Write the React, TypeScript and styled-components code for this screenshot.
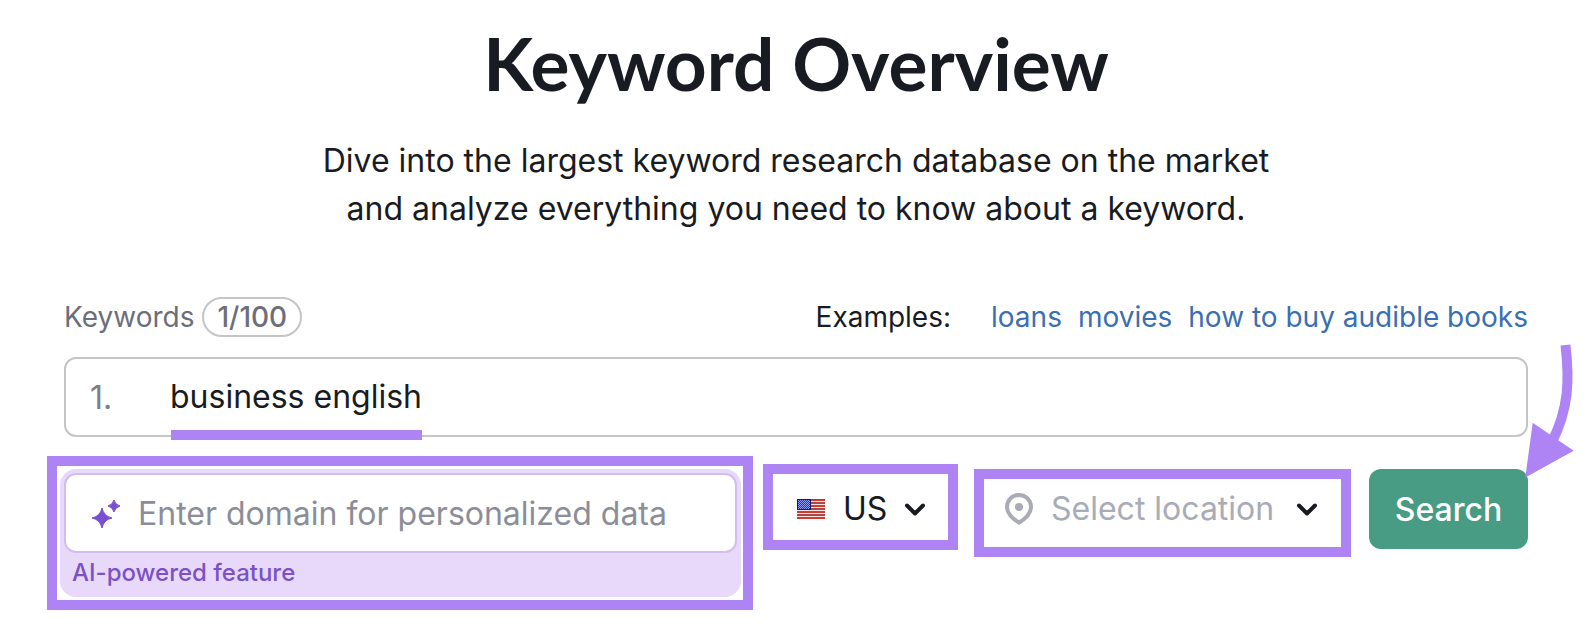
import React from "react";
import styled, { createGlobalStyle } from "styled-components";

const GlobalStyle = createGlobalStyle`
  *, *::before, *::after { box-sizing: border-box; }
  body {
    margin: 0;
    background: #fff;
    color: #191b23;
    font-family: Inter, "Liberation Sans", sans-serif;
    font-optical-sizing: none;
  }
`;

const accent = "#ae84f5";

const Page = styled.main`
  padding: 18px 58px 24px 64px;
`;

const Header = styled.header`
  text-align: center;
`;

const Title = styled.h1`
  margin: 0;
  font-family: Lato, Inter, sans-serif;
  font-size: 73px;
  font-weight: 700;
  line-height: 90px;
`;

const Subtitle = styled.p`
  margin: 29px 0 0;
  font-size: 32px;
  line-height: 48px;
`;

const LabelRow = styled.div`
  display: flex;
  justify-content: space-between;
  align-items: center;
  margin-top: 64px;
  font-size: 28px;
  line-height: 40px;
`;

const KeywordsLabel = styled.label`
  display: flex;
  align-items: center;
  gap: 8px;
  color: #6c6e79;
`;

const Counter = styled.span`
  height: 40px;
  padding: 0 13px;
  border: 2px solid #c4c5c9;
  border-radius: 20px;
  font-weight: 500;
  line-height: 36px;
`;

const Examples = styled.nav`
  display: flex;
  gap: 16px;
`;

const ExamplesTitle = styled.span`
  margin-right: 24px;
`;

const ExampleLink = styled.a`
  color: #3a6fb0;
  text-decoration: none;
`;

const KeywordField = styled.div`
  position: relative;
  display: flex;
  align-items: center;
  height: 80px;
  margin-top: 20px;
  padding: 0 24px;
  border: 2px solid #c4c5c9;
  border-radius: 12px;
  font-size: 32px;
`;

const LineNumber = styled.span`
  width: 80px;
  color: #7c7e88;
`;

const TextInput = styled.input`
  flex: 1;
  min-width: 0;
  padding: 0;
  border: 0;
  outline: 0;
  background: transparent;
  color: inherit;
  font: inherit;
  line-height: 48px;

  &::placeholder {
    color: #8b8d98;
    opacity: 1;
  }
`;

const Underline = styled.div`
  position: absolute;
  left: 105px;
  bottom: -5px;
  width: 251px;
  height: 10px;
  background: ${accent};
`;

const ActionRow = styled.div`
  display: flex;
  align-items: flex-start;
  margin: 19px 0 0 -17px;
`;

const Frame = styled.div`
  border: 10px solid ${accent};
`;

const DomainFrame = styled(Frame)`
  flex: 1;
  min-width: 0;
  padding: 3px 2px 3px 3px;
`;

const DomainPanel = styled.div`
  height: 128px;
  padding: 4px;
  border-radius: 16px;
  background: #e8d9fb;
`;

const DomainField = styled.div`
  display: flex;
  align-items: center;
  gap: 18px;
  height: 80px;
  padding: 2px 24px 0;
  border: 2px solid #d3bcee;
  border-radius: 12px;
  background: #fff;
  font-size: 32px;
`;

const FeatureNote = styled.p`
  margin: 4px 8px 0;
  color: #7a52c6;
  font-size: 24px;
  font-weight: 500;
  line-height: 32px;
`;

const SelectFrame = styled(Frame)`
  display: flex;
  align-items: center;
`;

const CountryFrame = styled(SelectFrame)`
  width: 195px;
  height: 86px;
  margin: 8px 0 0 10px;
  padding: 4px 22px 0 24px;
`;

const LocationFrame = styled(SelectFrame)`
  width: 377px;
  height: 88px;
  margin: 13px 0 0 16px;
  padding: 0 23px 8px 21px;
`;

const Select = styled.select<{ $muted?: boolean }>`
  appearance: none;
  flex: 1;
  min-width: 0;
  margin: 0 0 0 18px;
  padding: 0;
  border: 0;
  outline: 0;
  background: transparent;
  color: ${(p) => (p.$muted ? "#a9abb6" : "#191b23")};
  font: inherit;
  font-size: 32px;
  line-height: 48px;
`;

const SearchSlot = styled.div`
  position: relative;
  margin: 13px 0 0 18px;
`;

const SearchButton = styled.button`
  width: 159px;
  height: 80px;
  padding: 0;
  border: 0;
  border-radius: 12px;
  background: #489c83;
  color: #fff;
  font: inherit;
  font-size: 32px;
  font-weight: 500;
`;

const Arrow = styled.svg`
  position: absolute;
  top: -127px;
  right: -47px;
  pointer-events: none;
`;

const Icon = styled.svg`
  display: block;
  flex: none;
`;

const Sparkles = () => (
  <Icon width="30" height="30" viewBox="0 0 30 30" fill="#7a4fcf" aria-hidden="true">
    <path d="M12 9 Q13.8 17.2 22 19 Q13.8 20.8 12 29 Q10.2 20.8 2 19 Q10.2 17.2 12 9Z" stroke="#7a4fcf" strokeWidth="1" strokeLinejoin="round" />
    <path d="M24 1 Q25.2 5.8 30 7 Q25.2 8.2 24 13 Q22.8 8.2 18 7 Q22.8 5.8 24 1Z" stroke="#7a4fcf" strokeWidth="1" strokeLinejoin="round" />
  </Icon>
);

const Chevron = () => (
  <Icon width="22" height="14" viewBox="0 0 22 14" fill="none" aria-hidden="true">
    <path d="M3 3.5 11 11.5 19 3.5" stroke="#191b23" strokeWidth="4" strokeLinecap="round" strokeLinejoin="round" />
  </Icon>
);

const Pin = () => (
  <Icon width="28" height="32" viewBox="0 0 28 32" aria-hidden="true">
    <path
      d="M14 2C7.4 2 2 7.2 2 13.8 2 21 8 26 14 29.6 20 26 26 21 26 13.8 26 7.2 20.6 2 14 2Z"
      fill="none"
      stroke="#a9abb6"
      strokeWidth="4"
    />
    <circle cx="14" cy="14" r="4" fill="#a9abb6" />
  </Icon>
);

const Flag = () => (
  <Icon width="28" height="20" viewBox="0 0 28 20" shapeRendering="crispEdges" aria-hidden="true">
    <defs>
      <pattern id="stars" width="2" height="2" patternUnits="userSpaceOnUse">
        <rect width="2" height="2" fill="#3430a8" />
        <rect width="1" height="1" fill="#8d9cf0" />
        <rect x="1" y="1" width="1" height="1" fill="#8d9cf0" />
      </pattern>
    </defs>
    <rect width="28" height="20" fill="#f6e4e2" />
    {[0, 3, 6, 9, 12, 15, 18].map((y, i) => (
      <rect key={y} y={y} width="28" height="2" fill={i % 2 ? "#a8484a" : "#d23c30"} />
    ))}
    <rect width="28" height="1" fill="#a04040" />
    <rect width="14" height="11" fill="#1d1668" />
    <rect x="1" y="1" width="12" height="9" fill="url(#stars)" />
  </Icon>
);

const exampleLinks = ["loans", "movies", "how to buy audible books"];

export default function App() {
  return (
    <>
      <GlobalStyle />
      <Page>
        <Header>
          <Title>Keyword Overview</Title>
          <Subtitle>
            Dive into the largest keyword research database on the market
            <br />
            and analyze everything you need to know about a keyword.
          </Subtitle>
        </Header>
        <form onSubmit={(e) => e.preventDefault()}>
          <LabelRow>
            <KeywordsLabel htmlFor="keyword">
              Keywords <Counter>1/100</Counter>
            </KeywordsLabel>
            <Examples>
              <ExamplesTitle>Examples:</ExamplesTitle>
              {exampleLinks.map((text) => (
                <ExampleLink key={text} href="#">
                  {text}
                </ExampleLink>
              ))}
            </Examples>
          </LabelRow>
          <KeywordField>
            <LineNumber>1.</LineNumber>
            <TextInput id="keyword" defaultValue="business english" />
            <Underline />
          </KeywordField>
          <ActionRow>
            <DomainFrame>
              <DomainPanel>
                <DomainField>
                  <Sparkles />
                  <TextInput
                    aria-label="Domain"
                    placeholder="Enter domain for personalized data"
                  />
                </DomainField>
                <FeatureNote>AI-powered feature</FeatureNote>
              </DomainPanel>
            </DomainFrame>
            <CountryFrame>
              <Flag />
              <Select aria-label="Country">
                <option>US</option>
              </Select>
              <Chevron />
            </CountryFrame>
            <LocationFrame>
              <Pin />
              <Select aria-label="Location" $muted>
                <option>Select location</option>
              </Select>
              <Chevron />
            </LocationFrame>
            <SearchSlot>
              <SearchButton type="submit">Search</SearchButton>
              <Arrow width="52" height="138" viewBox="0 0 52 138" aria-hidden="true">
                <path d="M42.5 3C46.5 38 46 66 29 100" fill="none" stroke={accent} strokeWidth="10" />
                <path d="M9.7 80.7 50.7 108.7 2.3 135.5Z" fill={accent} />
              </Arrow>
            </SearchSlot>
          </ActionRow>
        </form>
      </Page>
    </>
  );
}
